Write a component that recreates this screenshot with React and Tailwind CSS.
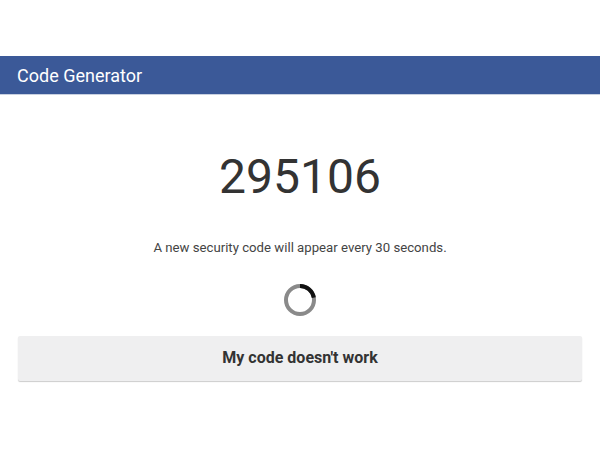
import React from "react";

const Spinner = () => (
  <svg width="34" height="34" viewBox="0 0 34 34">
    <circle cx="17" cy="17" r="14" fill="none" stroke="#8a8a8a" strokeWidth="4" />
    <path d="M17 3 A14 14 0 0 1 30.8 14.6" fill="none" stroke="#111" strokeWidth="4" />
  </svg>
);

export default function App() {
  return (
    <div className="w-[600px] h-[450px] bg-white font-['Roboto',sans-serif] flex flex-col">
      <div className="mt-[56px] h-[39px] bg-[#3b5998] flex items-center px-[17px] border-b border-[#c8d0e0]">
        <span className="text-white text-[18px]">Code Generator</span>
      </div>
      <div className="flex flex-col items-center">
        <div className="mt-[58px] text-[48px] leading-none text-[#333]">295106</div>
        <div className="mt-[37px] text-[13.2px] text-[#444]">
          A new security code will appear every 30 seconds.
        </div>
        <div className="mt-[25px]">
          <Spinner />
        </div>
      </div>
      <div className="px-[18px] mt-[19px]">
        <button className="w-full h-[45px] bg-[#efeff0] rounded-[2px] shadow-[0_1px_1px_rgba(0,0,0,0.2)] text-[16px] font-bold text-[#333]">
          My code doesn't work
        </button>
      </div>
    </div>
  );
}
